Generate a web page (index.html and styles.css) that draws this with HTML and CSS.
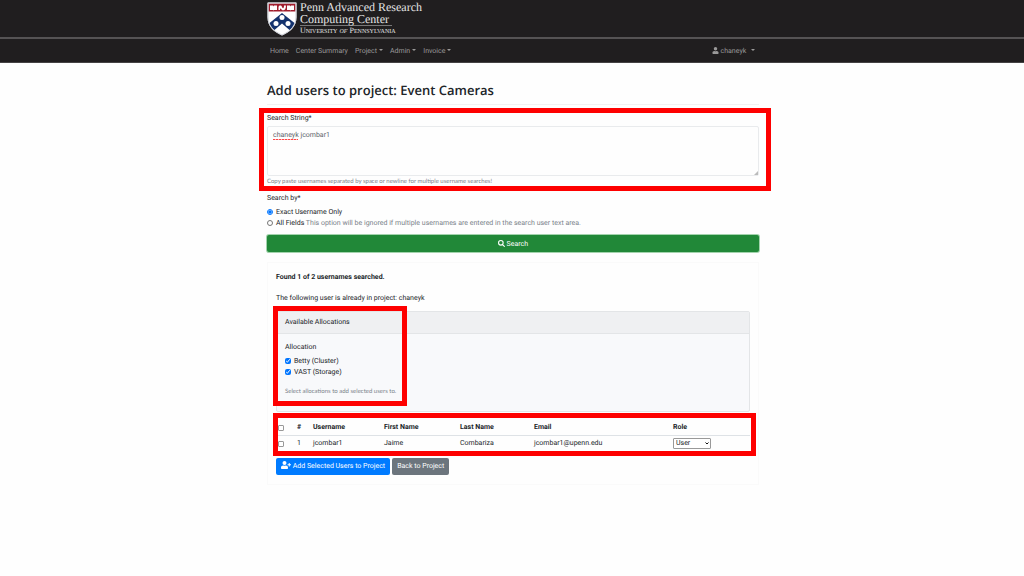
FILE: index.html
```
<!DOCTYPE html>
<html lang="en">
<head>
  <meta charset="UTF-8">
  <meta name="viewport" content="width=device-width, initial-scale=1">
  <title>Add users to project</title>
  <link rel="stylesheet" href="styles.css">
</head>
<body>

  <header class="brand-bar">
    <div class="container">
      <a class="brand" href="#">
        <svg class="shield" viewBox="0 0 60 68" aria-hidden="true">
          <path d="M1 1H59V30C59 50 46 60 30 67C14 60 1 50 1 30Z" fill="#fff"/>
          <path d="M3 3H57V19H3Z" fill="#a01c2c"/>
          <path d="M6 7H12L13 9L14 7H20V16H14L13 17L12 16H6ZM40 7H46L47 9L48 7H54V16H48L47 17L46 16H40Z" fill="#fff"/>
          <path d="M23 16V11C23 6 29 6 30 10C32 14 34 13 34 7H38C38 16 33 19 29 15C27 12 26 13 26 16Z" fill="#fff"/>
          <path d="M30 22L55 42C53 48 49 53 45 56L30 43L15 56C11 53 7 48 5 42Z" fill="#14336e"/>
          <circle cx="30" cy="31" r="5" fill="#fff"/>
          <circle cx="18" cy="43" r="5" fill="#fff"/>
          <circle cx="42" cy="43" r="5" fill="#fff"/>
          <path d="M2 2H58V30C58 49 46 59 30 66C14 59 2 49 2 30Z" fill="none" stroke="#c9ccd4" stroke-width="2"/>
        </svg>
        <span class="brand-text">
          <span class="brand-name">Penn Advanced Research<br>Computing Center</span>
          <span class="brand-sub">University <i>of</i> Pennsylvania</span>
        </span>
      </a>
    </div>
  </header>

  <nav class="navbar">
    <div class="container nav-row">
      <a href="#">Home</a>
      <a href="#">Center Summary</a>
      <a href="#" class="dropdown">Project</a>
      <a href="#" class="dropdown">Admin</a>
      <a href="#" class="dropdown">Invoice</a>
      <a href="#" class="dropdown user">
        <svg class="icon" viewBox="0 0 448 512" aria-hidden="true"><path fill="currentColor" d="M224 256a128 128 0 1 0 0-256 128 128 0 0 0 0 256zm90 32h-17a174 174 0 0 1-146 0h-17C60 288 0 348 0 422v42c0 27 21 48 48 48h352c27 0 48-21 48-48v-42c0-74-60-134-134-134z"/></svg>
        <span>chaneyk</span>
      </a>
    </div>
  </nav>

  <main class="container">
    <h1>Add users to project: Event Cameras</h1>
    <hr>

    <form>
      <div class="field marked mark-search">
        <label for="q">Search String*</label>
        <div class="textarea-wrap">
          <textarea id="q" spellcheck="false">chaneyk jcombar1</textarea>
          <span class="squiggle"></span>
          <svg class="grip" viewBox="0 0 5 5" aria-hidden="true"><path d="M5 0V5H0Z" fill="#bbb"/></svg>
        </div>
        <small class="help">Copy paste usernames separated by space or newline for multiple username searches!</small>
      </div>

      <fieldset>
        <legend>Search by*</legend>
        <label class="check"><input type="radio" name="by" checked> <span>Exact Username Only</span></label>
        <label class="check"><input type="radio" name="by"> <span>All Fields <span class="muted">This option will be ignored if multiple usernames are entered in the search user text area.</span></span></label>
      </fieldset>

      <button type="button" class="btn btn-search">
        <svg class="icon" viewBox="0 0 512 512" aria-hidden="true"><path fill="none" stroke="currentColor" stroke-width="80" stroke-linecap="round" d="M208 40a168 168 0 1 0 0 336 168 168 0 0 0 0-336zM335 335L465 465"/></svg>
        Search
      </button>
    </form>

    <section class="results">
      <p class="found">Found 1 of 2 usernames searched.</p>
      <p class="notice">The following user is already in project: chaneyk</p>

      <div class="card marked mark-alloc">
        <div class="card-header">Available Allocations</div>
        <fieldset class="card-body">
          <legend>Allocation</legend>
          <label class="check"><input type="checkbox" checked> <span>Betty (Cluster)</span></label>
          <label class="check"><input type="checkbox" checked> <span>VAST (Storage)</span></label>
          <small class="help">Select allocations to add selected users to.</small>
        </fieldset>
      </div>

      <div class="marked mark-table">
        <table>
          <thead>
            <tr>
              <th class="c-check"><input type="checkbox" aria-label="Select all"></th>
              <th class="c-num">#</th>
              <th class="c-user">Username</th>
              <th class="c-first">First Name</th>
              <th class="c-last">Last Name</th>
              <th class="c-email">Email</th>
              <th>Role</th>
            </tr>
          </thead>
          <tbody>
            <tr>
              <td><input type="checkbox" aria-label="Select jcombar1"></td>
              <td>1</td>
              <td>jcombar1</td>
              <td>Jaime</td>
              <td>Combariza</td>
              <td>jcombar1@upenn.edu</td>
              <td>
                <div class="select-wrap">
                  <select aria-label="Role"><option>User</option><option>Manager</option></select>
                  <svg viewBox="0 0 8 6" aria-hidden="true"><path d="M1 1L4 4L7 1" fill="none" stroke="#111" stroke-width="2"/></svg>
                </div>
              </td>
            </tr>
          </tbody>
        </table>
      </div>

      <div class="actions">
        <button type="button" class="btn btn-primary">
          <svg class="icon icon-wide" viewBox="0 0 640 512" aria-hidden="true"><path fill="currentColor" d="M624 208h-64v-64c0-9-7-16-16-16h-32c-9 0-16 7-16 16v64h-64c-9 0-16 7-16 16v32c0 9 7 16 16 16h64v64c0 9 7 16 16 16h32c9 0 16-7 16-16v-64h64c9 0 16-7 16-16v-32c0-9-7-16-16-16zM224 256a128 128 0 1 0 0-256 128 128 0 0 0 0 256zm90 32h-17a174 174 0 0 1-146 0h-17C60 288 0 348 0 422v42c0 27 21 48 48 48h352c27 0 48-21 48-48v-42c0-74-60-134-134-134z"/></svg>
          Add Selected Users to Project
        </button>
        <a href="#" class="btn btn-secondary">Back to Project</a>
      </div>
    </section>
  </main>

</body>
</html>
```
FILE: styles.css
```
*, *::after { box-sizing: border-box; }
body { margin: 0; background: #fefefe; color: #212529; font-family: Roboto, "Noto Sans", sans-serif; font-size: 7px; line-height: 11px; text-rendering: geometricPrecision; }
a { text-decoration: none; color: inherit; }
.container { width: 50%; min-width: 492px; max-width: 570px; margin: 0 auto; padding: 0 9px 0 11px; }

/* header */
.brand-bar { background: #201e1f; border-bottom: 2px solid #555354; height: 39px; }
.brand { display: inline-flex; gap: 3px; color: #e4e4e4; }
.shield { width: 30px; height: 34px; margin-top: 2px; }
.brand-text { font-family: "Liberation Serif", serif; padding-top: 1px; }
.brand-name { display: block; font-size: 12px; line-height: 12px; }
.brand-sub { display: block; width: 92px; font-size: 8px; line-height: 9px; font-variant: small-caps; white-space: nowrap; border-top: 1px solid #777; }
.navbar { background: #201e1f; height: 24px; color: #9a9999; border-bottom: 1px solid #454344; }
.nav-row { display: flex; align-items: center; gap: 7px; height: 23px; padding: 2px 13px 0 14px; }
.dropdown::after { content: ""; display: inline-block; margin-left: 2px; vertical-align: 2px; border: 2px solid transparent; border-top-color: currentColor; border-bottom: 0; }
.user { margin-left: auto; }
.user::after { margin-left: 3px; }
.icon { width: 7px; height: 7px; vertical-align: -1px; }
.icon-wide { width: 10px; height: 8px; }

h1 { font-family: "Open Sans", sans-serif; font-size: 13px; line-height: 16px; font-weight: 600; margin: 19px 0 6px; }
hr { border: 0; border-top: 1px solid #f1f1f1; margin: 0 0 8px; }
fieldset { border: 0; margin: 0; padding: 0; min-width: 0; }
legend { padding: 0; }
label { display: block; }
input { width: 6px; height: 6px; margin: 0; flex: none; }
.check { display: flex; align-items: flex-start; gap: 3px; }
.check input { margin-top: 2px; }
.muted, .help { color: #7a828a; }
.help { display: block; font-family: Lato, sans-serif; font-size: 6px; line-height: 8px; }

/* red highlight frames */
.marked { position: relative; }
.marked::after { content: ""; position: absolute; border: 5px solid #fe0000; pointer-events: none; }
.mark-search::after { inset: -5px -12px -5px -8px; }
.mark-alloc::after { top: -6px; left: -4px; width: 134px; bottom: 5px; }
.mark-table::after { inset: -7px -6px -5px -3px; }

/* search form */
.textarea-wrap { position: relative; margin-top: 2px; }
textarea { display: block; width: 100%; height: 50px; padding: 3px 5px; border: 1px solid #e9ebed; border-radius: 2px; background: #fefefe; color: #5c636a; font: inherit; resize: none; text-rendering: inherit; }
.squiggle { position: absolute; left: 6px; top: 13px; width: 25px; height: 1px; background: repeating-linear-gradient(90deg, #f44 0 2px, #fbb 2px 3px); }
.grip { position: absolute; right: 1px; bottom: 1px; width: 4px; height: 4px; }
.field .help { margin-top: 2px; }
form fieldset { margin-top: 7px; }
form legend { margin-bottom: 3px; }
.btn { display: inline-block; border: 0; border-radius: 2px; color: #fff; font: inherit; line-height: 11px; padding: 3px 5px; text-rendering: inherit; }
.btn-search { display: block; width: 100%; margin-top: 6px; padding: 4px 5px 2px; background: #218838; box-shadow: 0 0 0 1px #a3d3ad; }

/* results */
.results { margin-top: 10px; padding: 9px 8px; border: 1px solid #fafafa; }
p { margin: 0; }
.found { font-weight: 700; }
.notice { margin-top: 10px; }
.card { margin-top: 7px; border: 1px solid #e3e5e7; border-radius: 2px; background: #f8f9fb; }
.card-header { padding: 5px 8px; background: #eff0f2; border-bottom: 1px solid #e3e5e7; }
.card-body { padding: 8px 8px 15px; }
.card-body legend { float: left; width: 100%; margin-bottom: 3px; }
.card-body .check { clear: both; }
.card-body .help { margin-top: 10px; }

.mark-table { margin-top: 8px; }
table { width: 100%; table-layout: fixed; border-collapse: collapse; }
th, td { text-align: left; padding: 2px 3px; height: 15px; }
th { border-bottom: 1px solid #dee2e6; }
th:first-child, td:first-child { padding-left: 2px; }
td:nth-child(2), th:nth-child(2) { padding-left: 2px; }
table input { display: block; appearance: none; border: 1px solid #999; border-radius: 1px; background: #fff; }
table input:checked { background: #0075ff; }
.c-check { width: 19px; }
.c-num { width: 15px; }
.c-user { width: 71px; }
.c-first { width: 76px; }
.c-last { width: 74px; }
.c-email { width: 139px; }
.select-wrap { position: relative; width: 38px; }
select { display: block; appearance: none; width: 100%; height: 11px; padding: 0 2px; border: 1px solid #999; border-radius: 1px; background: #fff; color: #212529; font: inherit; line-height: 9px; text-rendering: inherit; }
.select-wrap svg { position: absolute; right: 2px; top: 4px; width: 4px; height: 3px; }
.actions { display: flex; gap: 2px; margin-top: 7px; }
.btn-primary { background: #007bff; }
.btn-secondary { background: #6c757d; }
```
